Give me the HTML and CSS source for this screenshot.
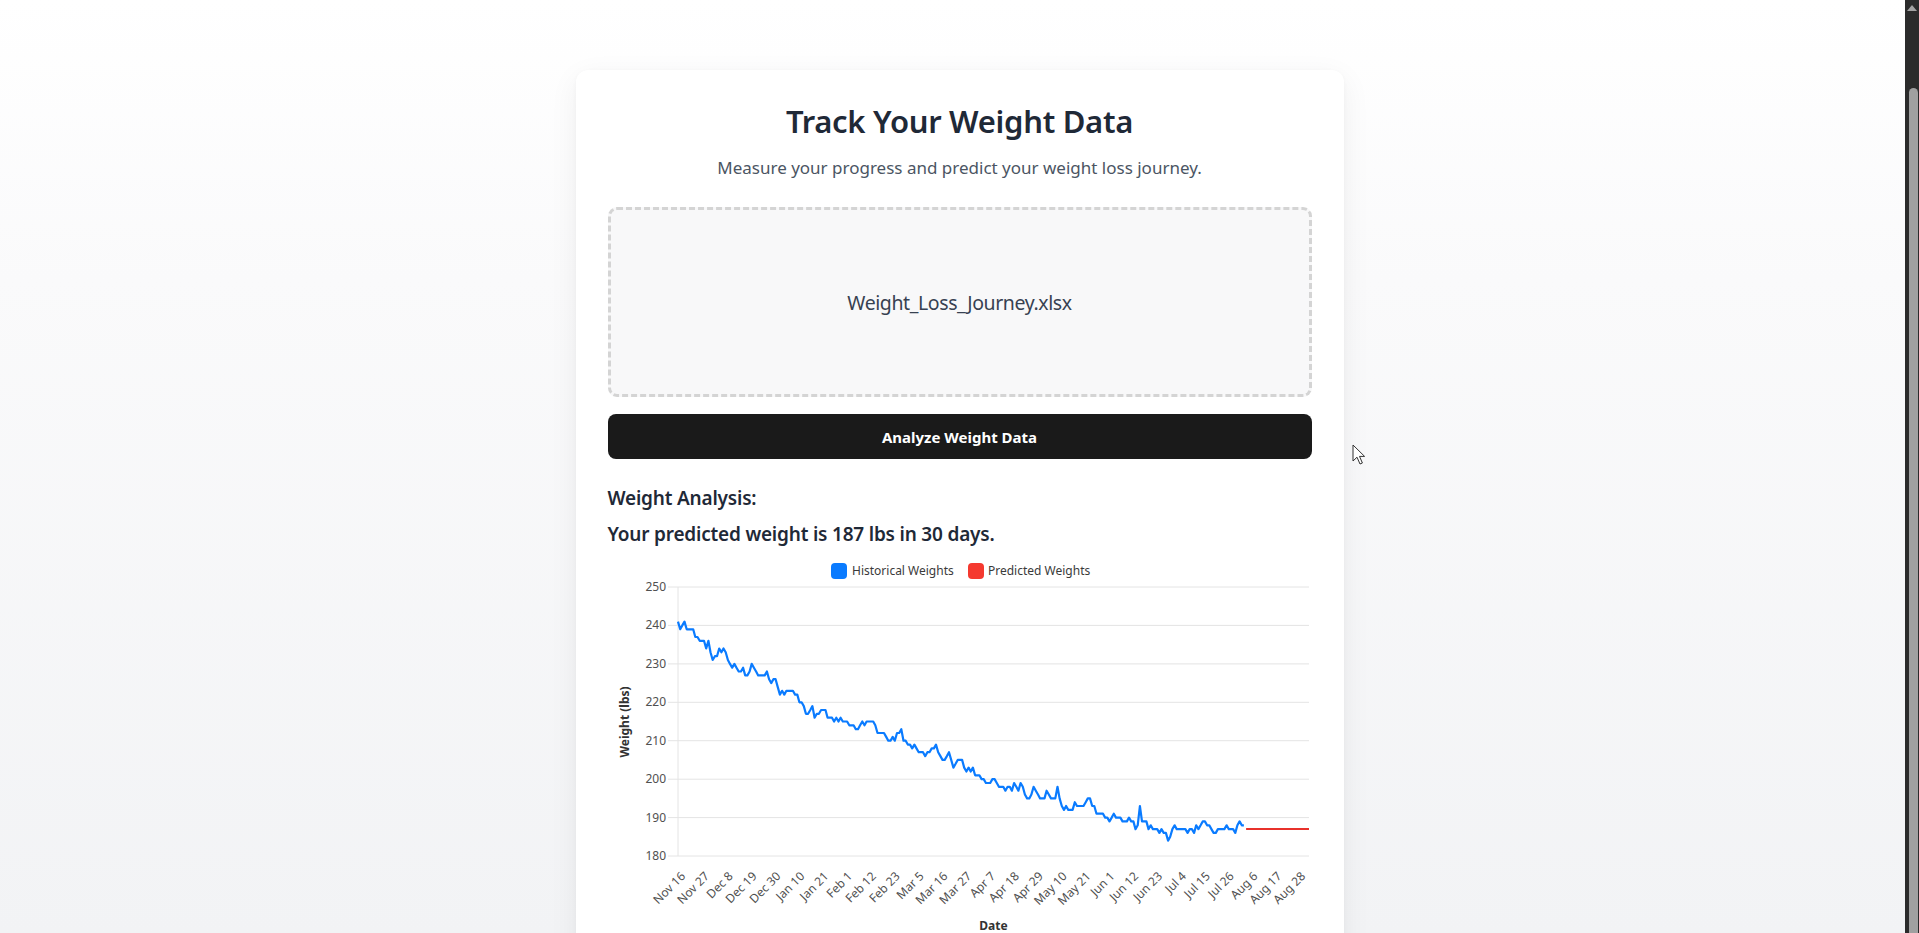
FILE: index.html
```html
<!DOCTYPE html>
<html lang="en">
<head>
<meta charset="utf-8">
<title>Track Your Weight Data</title>
<link rel="stylesheet" href="styles.css">
</head>
<body>
  <div class="page">
    <main class="card">
      <h1 class="title">Track Your Weight Data</h1>
      <p class="subtitle">Measure your progress and predict your weight loss journey.</p>
      <div class="dropzone"><span class="filename">Weight_Loss_Journey.xlsx</span></div>
      <button class="analyze" type="button">Analyze Weight Data</button>
      <section class="results">
        <h2 class="results-heading">Weight Analysis:</h2>
        <p class="prediction">Your predicted weight is 187 lbs in 30 days.</p>
        <div class="chart">
          <svg class="chart-svg" width="704" height="390" viewBox="0 0 704 390">
            <g class="legend">
              <rect x="223" y="12" width="16" height="16" rx="4" fill="#0a7bff"/>
              <text x="244" y="24">Historical Weights</text>
              <rect x="360" y="12" width="16" height="16" rx="4" fill="#f5392f"/>
              <text x="380" y="24">Predicted Weights</text>
            </g>
            <g class="grid">
              <line x1="60" y1="36" x2="701" y2="36"/>
              <line x1="60" y1="74.4" x2="701" y2="74.4"/>
              <line x1="60" y1="112.9" x2="701" y2="112.9"/>
              <line x1="60" y1="151.3" x2="701" y2="151.3"/>
              <line x1="60" y1="189.7" x2="701" y2="189.7"/>
              <line x1="60" y1="228.2" x2="701" y2="228.2"/>
              <line x1="60" y1="266.6" x2="701" y2="266.6"/>
              <line x1="60" y1="305" x2="701" y2="305"/>
              <line x1="70" y1="36" x2="70" y2="305"/>
            </g>
            <g class="ylabels">
              <text x="58" y="40">250</text>
              <text x="58" y="78.4">240</text>
              <text x="58" y="116.9">230</text>
              <text x="58" y="155.3">220</text>
              <text x="58" y="193.7">210</text>
              <text x="58" y="232.2">200</text>
              <text x="58" y="270.6">190</text>
              <text x="58" y="309">180</text>
            </g>
            <text class="axis-title" transform="translate(21 171) rotate(-90)">Weight (lbs)</text>
            <g class="xlabels">
              <text x="78" y="326" transform="rotate(-45 78 326)">Nov 16</text>
              <text x="101.85" y="326" transform="rotate(-45 101.85 326)">Nov 27</text>
              <text x="125.7" y="326" transform="rotate(-45 125.7 326)">Dec 8</text>
              <text x="149.56" y="326" transform="rotate(-45 149.56 326)">Dec 19</text>
              <text x="173.41" y="326" transform="rotate(-45 173.41 326)">Dec 30</text>
              <text x="197.26" y="326" transform="rotate(-45 197.26 326)">Jan 10</text>
              <text x="221.11" y="326" transform="rotate(-45 221.11 326)">Jan 21</text>
              <text x="244.96" y="326" transform="rotate(-45 244.96 326)">Feb 1</text>
              <text x="268.82" y="326" transform="rotate(-45 268.82 326)">Feb 12</text>
              <text x="292.67" y="326" transform="rotate(-45 292.67 326)">Feb 23</text>
              <text x="316.52" y="326" transform="rotate(-45 316.52 326)">Mar 5</text>
              <text x="340.37" y="326" transform="rotate(-45 340.37 326)">Mar 16</text>
              <text x="364.22" y="326" transform="rotate(-45 364.22 326)">Mar 27</text>
              <text x="388.08" y="326" transform="rotate(-45 388.08 326)">Apr 7</text>
              <text x="411.93" y="326" transform="rotate(-45 411.93 326)">Apr 18</text>
              <text x="435.78" y="326" transform="rotate(-45 435.78 326)">Apr 29</text>
              <text x="459.63" y="326" transform="rotate(-45 459.63 326)">May 10</text>
              <text x="483.48" y="326" transform="rotate(-45 483.48 326)">May 21</text>
              <text x="507.34" y="326" transform="rotate(-45 507.34 326)">Jun 1</text>
              <text x="531.19" y="326" transform="rotate(-45 531.19 326)">Jun 12</text>
              <text x="555.04" y="326" transform="rotate(-45 555.04 326)">Jun 23</text>
              <text x="578.89" y="326" transform="rotate(-45 578.89 326)">Jul 4</text>
              <text x="602.74" y="326" transform="rotate(-45 602.74 326)">Jul 15</text>
              <text x="626.6" y="326" transform="rotate(-45 626.6 326)">Jul 26</text>
              <text x="650.45" y="326" transform="rotate(-45 650.45 326)">Aug 6</text>
              <text x="674.3" y="326" transform="rotate(-45 674.3 326)">Aug 17</text>
              <text x="698.15" y="326" transform="rotate(-45 698.15 326)">Aug 28</text>
            </g>
            <text class="axis-title x-title" x="385.5" y="379">Date</text>
            <polyline id="historical" class="line-hist" points=""/>
            <line class="line-pred" x1="638.1" y1="278.1" x2="701" y2="278.1"/>
          </svg>
        </div>
      </section>
    </main>
  </div>

  <div class="scrollbar">
    <div class="scroll-arrow"></div>
    <div class="scroll-thumb"></div>
  </div>

  <svg class="cursor" width="14" height="22" viewBox="0 0 14 22">
    <path d="M1 1 L1 17 L5 13.2 L8 20 L10.4 19 L7.5 12.4 L12.6 12.4 Z" fill="#fff" stroke="#333" stroke-width="1" stroke-linejoin="round"/>
  </svg>

  <script src="script.js"></script>
</body>
</html>
```

FILE: styles.css
```css
* {
  box-sizing: border-box;
}

html, body {
  margin: 0;
  padding: 0;
  height: 933px;
  overflow: hidden;
}

body {
  font-family: "Segoe UI", "Noto Sans", sans-serif;
  background: linear-gradient(to bottom, #ffffff 0%, #fafafb 30%, #f2f3f5 100%);
  color: #1f2937;
  position: relative;
}

.page {
  display: flex;
  justify-content: center;
  padding-top: 70px;
}

.card {
  width: 768px;
  background: #ffffff;
  border-radius: 12px;
  box-shadow: 0 8px 30px rgba(0, 0, 0, 0.06), 0 1px 4px rgba(0, 0, 0, 0.03);
  padding: 32px 32px 40px;
  display: flex;
  flex-direction: column;
}

.title {
  margin: 0;
  font-size: 31px;
  line-height: 38px;
  font-weight: 600;
  letter-spacing: -0.3px;
  text-align: center;
  color: #1f2937;
}

.subtitle {
  margin: 15px 0 0;
  font-size: 17px;
  line-height: 26px;
  text-align: center;
  color: #4b5563;
}

.dropzone {
  margin-top: 26px;
  height: 190px;
  border: 3px dashed #d4d4d4;
  border-radius: 9px;
  background: #f8f8f9;
  display: flex;
  align-items: center;
  justify-content: center;
}

.filename {
  font-size: 19.5px;
  line-height: 30px;
  letter-spacing: -0.4px;
  color: #374151;
  padding-top: 2px;
}

.analyze {
  margin-top: 17px;
  height: 45px;
  border: none;
  border-radius: 8px;
  background: #1a1a1a;
  color: #ffffff;
  font-family: inherit;
  font-size: 15px;
  line-height: 20px;
  font-weight: 700;
  cursor: pointer;
}

.results {
  margin-top: 25px;
  display: flex;
  flex-direction: column;
}

.results-heading {
  margin: 0;
  font-size: 19px;
  line-height: 28px;
  font-weight: 600;
  letter-spacing: -0.2px;
  color: #1f2937;
}

.prediction {
  margin: 8px 0 0;
  font-size: 19px;
  line-height: 28px;
  font-weight: 600;
  letter-spacing: -0.2px;
  color: #1f2937;
}

.chart {
  margin-top: 3px;
}

.chart-svg {
  display: block;
  overflow: visible;
  font-family: "Segoe UI", "Noto Sans", sans-serif;
}

.legend text {
  font-size: 12px;
  fill: #3a3a3a;
}

.grid line {
  stroke: #e4e4e4;
  stroke-width: 1;
}

.ylabels text {
  font-size: 12px;
  fill: #505050;
  text-anchor: end;
}

.xlabels text {
  font-size: 12px;
  fill: #505050;
  text-anchor: end;
}

.axis-title {
  font-size: 12px;
  font-weight: 700;
  fill: #333;
  text-anchor: middle;
}

.line-hist {
  fill: none;
  stroke: #0a7bff;
  stroke-width: 2.2;
  stroke-linejoin: round;
}

.line-pred {
  stroke: #e8312b;
  stroke-width: 2;
}

.scrollbar {
  position: absolute;
  top: 0;
  right: 0;
  width: 14px;
  height: 933px;
  background: #2b2b2b;
  display: flex;
  flex-direction: column;
  align-items: center;
}

.scroll-arrow {
  margin-top: 5px;
  width: 0;
  height: 0;
  border-left: 5px solid transparent;
  border-right: 5px solid transparent;
  border-bottom: 6px solid #a3a3a3;
}

.scroll-thumb {
  margin-top: 77px;
  width: 9px;
  flex: 1;
  background: #a0a0a0;
  border-radius: 5px 5px 0 0;
  margin-left: 2px;
}

.cursor {
  position: absolute;
  left: 1352px;
  top: 444px;
}
```

FILE: script.js
```js
(function () {
  var anchors = [
    [678.2, 241], [680.5, 239], [683, 240.5], [685.5, 240], [687.5, 238], [690, 240],
    [695, 237], [699, 236], [703.3, 235.7], [706, 234], [708, 236], [710.3, 233.3],
    [712.7, 231], [715, 232], [717, 231], [719.8, 234], [723, 234], [726.9, 231.8],
    [731, 230], [736.3, 228.7], [741, 228], [750.5, 228], [751.9, 230], [756.1, 227],
    [767, 227], [769, 226], [771.7, 225.2], [774, 226], [778.8, 223], [792.9, 223],
    [795.3, 222], [797, 223], [800, 219], [803, 220], [807.1, 216.7], [811.8, 219],
    [815, 217], [818.9, 217.5], [823.6, 219], [828.3, 216], [832, 215], [835.4, 215.2],
    [839, 216], [844.8, 215], [850, 214], [855, 213], [859, 213], [863.7, 215],
    [873.2, 215], [877.9, 212.5], [880.2, 211], [885, 212.5], [888.3, 210], [894.4, 210],
    [899.1, 213], [903.8, 211], [907, 210], [910.9, 208], [915.6, 209], [918, 207],
    [922.7, 207], [930, 207], [936.9, 208], [940, 206], [943.9, 205], [948.7, 207],
    [953.4, 203], [958.1, 205], [962, 204], [965.2, 202], [972.3, 203], [975, 201.5],
    [979.3, 201], [984, 200], [988.8, 199], [993.5, 200], [998, 198], [1002.9, 197],
    [1007.7, 198], [1013, 198], [1019.4, 198], [1021.8, 199], [1025, 197], [1028.9, 195.3],
    [1033.6, 198], [1038, 196], [1043, 194.8], [1046, 196], [1050.1, 196], [1053, 194],
    [1057.2, 197], [1060, 195], [1064.3, 191.8], [1071.4, 192], [1076.1, 194], [1078, 193],
    [1080.8, 192], [1085, 194], [1090.2, 195], [1097.3, 191.5], [1104.4, 191], [1109.1, 189],
    [1113.8, 191], [1117, 190], [1120.9, 190], [1125.6, 188], [1130.4, 190], [1135.1, 187],
    [1138, 189], [1139.8, 193], [1142, 189], [1144.5, 188], [1149, 188], [1154, 187.5],
    [1160, 186], [1164, 186], [1168.1, 184], [1172.8, 187], [1178, 187], [1184.6, 187],
    [1189.3, 186], [1196.4, 187.5], [1200, 187], [1203.5, 189], [1208.2, 187], [1212, 187],
    [1215.3, 186], [1220, 187], [1224.7, 187.5], [1229, 187], [1234.2, 186.5], [1238.9, 188],
    [1243.6, 188]
  ];

  var step = 631 / 291;
  var seed = 12345;
  function rand() {
    seed = (seed * 1103515245 + 12345) % 2147483648;
    return seed / 2147483648;
  }

  function interp(xf) {
    if (xf <= anchors[0][0]) return anchors[0][1];
    for (var k = 1; k < anchors.length; k++) {
      if (xf <= anchors[k][0]) {
        var a = anchors[k - 1], b = anchors[k];
        var t = (xf - a[0]) / (b[0] - a[0]);
        return a[1] + (b[1] - a[1]) * t;
      }
    }
    return anchors[anchors.length - 1][1];
  }

  var pts = [];
  for (var i = 0; i <= 261; i++) {
    var xf = 678 + i * step;
    var v = interp(xf) + (rand() - 0.5) * 1.6;
    v = Math.round(v);
    if (i === 0) v = 241;
    var x = xf - 608;
    var y = 36 + (250 - v) * 269 / 70;
    pts.push(x.toFixed(1) + "," + y.toFixed(1));
  }
  document.getElementById("historical").setAttribute("points", pts.join(" "));
})();
```
